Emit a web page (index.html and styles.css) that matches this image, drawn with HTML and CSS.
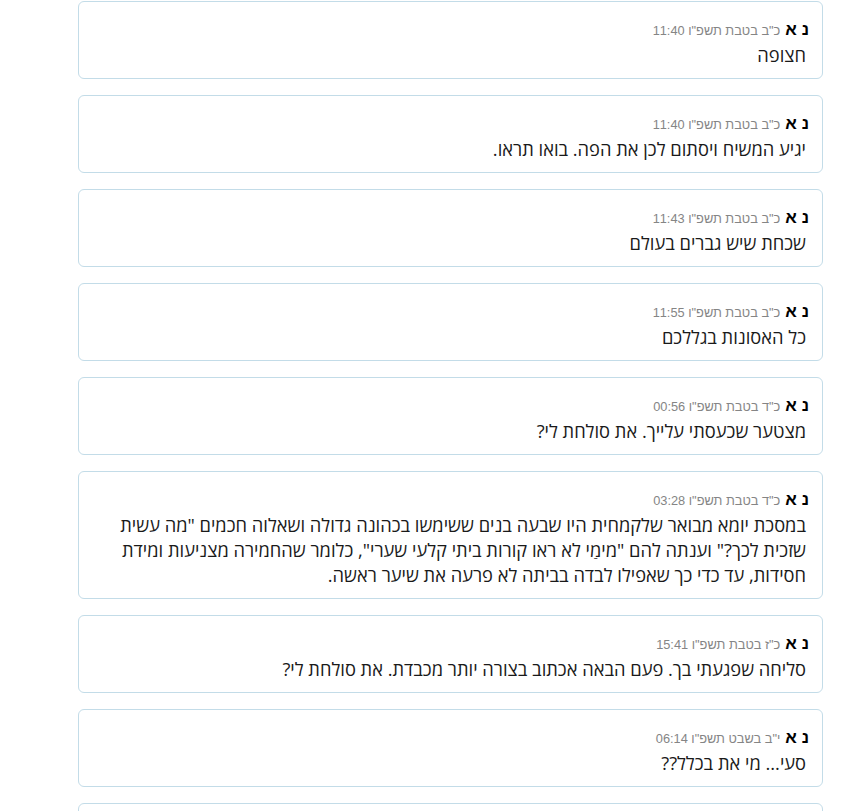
FILE: index.html
```html
<!DOCTYPE html>
<html lang="he" dir="rtl">
<head>
<meta charset="utf-8">
<link rel="stylesheet" href="styles.css">
</head>
<body>
<div class="feed">
  <div class="card">
    <div class="head"><span class="name">נ א</span><span class="date">כ"ב בטבת תשפ"ו 11:40</span></div>
    <div class="msg">חצופה</div>
  </div>
  <div class="card">
    <div class="head"><span class="name">נ א</span><span class="date">כ"ב בטבת תשפ"ו 11:40</span></div>
    <div class="msg">יגיע המשיח ויסתום לכן את הפה. בואו תראו.</div>
  </div>
  <div class="card">
    <div class="head"><span class="name">נ א</span><span class="date">כ"ב בטבת תשפ"ו 11:43</span></div>
    <div class="msg">שכחת שיש גברים בעולם</div>
  </div>
  <div class="card">
    <div class="head"><span class="name">נ א</span><span class="date">כ"ב בטבת תשפ"ו 11:55</span></div>
    <div class="msg">כל האסונות בגללכם</div>
  </div>
  <div class="card">
    <div class="head"><span class="name">נ א</span><span class="date">כ"ד בטבת תשפ"ו 00:56</span></div>
    <div class="msg">מצטער שכעסתי עלייך. את סולחת לי?</div>
  </div>
  <div class="card">
    <div class="head"><span class="name">נ א</span><span class="date">כ"ד בטבת תשפ"ו 03:28</span></div>
    <div class="msg">במסכת יומא מבואר שלקמחית היו שבעה בנים ששימשו בכהונה גדולה ושאלוה חכמים "מה עשית שזכית לכך?" וענתה להם "מימַי לא ראו קורות ביתי קלעי שערי", כלומר שהחמירה מצניעות ומידת חסידות, עד כדי כך שאפילו לבדה בביתה לא פרעה את שיער ראשה.</div>
  </div>
  <div class="card">
    <div class="head"><span class="name">נ א</span><span class="date">כ"ז בטבת תשפ"ו 15:41</span></div>
    <div class="msg">סליחה שפגעתי בך. פעם הבאה אכתוב בצורה יותר מכבדת. את סולחת לי?</div>
  </div>
  <div class="card">
    <div class="head"><span class="name">נ א</span><span class="date">י"ב בשבט תשפ"ו 06:14</span></div>
    <div class="msg">סעי... מי את בכלל??</div>
  </div>
  <div class="card">
    <div class="head"><span class="name">נ א</span><span class="date">י"ב בשבט תשפ"ו 06:20</span></div>
    <div class="msg">&nbsp;</div>
  </div>
</div>
</body>
</html>
```

FILE: styles.css
```css
html, body {
  margin: 0;
  padding: 0;
  background: #ffffff;
}

body {
  font-family: "Open Sans", "Liberation Sans", sans-serif;
  color: #222;
}

.feed {
  width: 745px;
  margin: 1px 22px 0 0;
  display: flex;
  flex-direction: column;
  gap: 16px;
}

.card {
  box-sizing: border-box;
  border: 1px solid #c3dce8;
  border-radius: 6px;
  padding: 16px 13px 11px 16px;
  background: #fff;
}

.head {
  height: 24px;
  line-height: 24px;
  display: flex;
  align-items: baseline;
  gap: 5px;
  white-space: nowrap;
}

.name {
  font-family: "Liberation Sans", sans-serif;
  font-weight: bold;
  font-size: 17px;
  color: #000;
}

.date {
  font-family: "Liberation Sans", sans-serif;
  font-size: 12.8px;
  color: #858585;
}

.msg {
  font-size: 18.3px;
  line-height: 25px;
  padding-right: 3px;
  color: #1a1a1a;
}
```
